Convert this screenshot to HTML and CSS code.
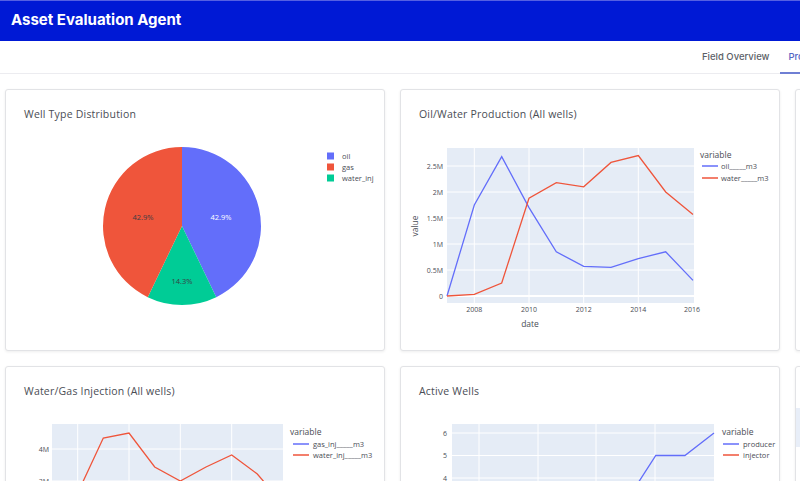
FILE: index.html
```html
<!DOCTYPE html>
<html>
<head>
<meta charset="utf-8">
<title>Asset Evaluation Agent</title>
<link rel="stylesheet" href="styles.css">
</head>
<body>
<header class="topbar">
  <h1 class="app-title">Asset Evaluation Agent</h1>
</header>
<nav class="tabs">
  <div class="tab">Field Overview</div>
  <div class="tab active">Production</div>
  <div class="tab">Wells</div>
</nav>
<main class="grid">
  <section class="card">
    <div class="card-title">Well Type Distribution</div>
    <svg class="chart" viewBox="0 0 378 229" width="378" height="229">
      <path d="M176,105 L176,26 A79,79 0 0 1 210.26,176.18 Z" fill="#636efa"/>
      <path d="M176,105 L210.26,176.18 A79,79 0 0 1 141.74,176.18 Z" fill="#00cc96"/>
      <path d="M176,105 L141.74,176.18 A79,79 0 0 1 176,26 Z" fill="#ef553b"/>
      <text class="pl-w" x="215" y="99" text-anchor="middle">42.9%</text>
      <text class="pl" x="137" y="99" text-anchor="middle">42.9%</text>
      <text class="pl" x="176" y="163" text-anchor="middle">14.3%</text>
      <rect x="321" y="31.5" width="7" height="7" fill="#636efa"/>
      <rect x="321" y="42.5" width="7" height="7" fill="#ef553b"/>
      <rect x="321" y="53.5" width="7" height="7" fill="#00cc96"/>
      <text class="lg" x="336" y="37.5">oil</text>
      <text class="lg" x="336" y="48.5">gas</text>
      <text class="lg" x="336" y="59.5">water_inj</text>
    </svg>
  </section>

  <section class="card">
    <div class="card-title">Oil/Water Production (All wells)</div>
    <svg class="chart" viewBox="0 0 378 229" width="378" height="229">
      <rect x="46" y="27" width="247" height="155" fill="#e5ecf6"/>
      <g stroke="#fff" stroke-width="1">
        <line x1="46" x2="293" y1="149" y2="149"/>
        <line x1="46" x2="293" y1="123" y2="123"/>
        <line x1="46" x2="293" y1="97" y2="97"/>
        <line x1="46" x2="293" y1="71" y2="71"/>
        <line x1="46" x2="293" y1="45" y2="45"/>
        <line x1="73.3" x2="73.3" y1="27" y2="182"/>
        <line x1="128" x2="128" y1="27" y2="182"/>
        <line x1="182.7" x2="182.7" y1="27" y2="182"/>
        <line x1="237.3" x2="237.3" y1="27" y2="182"/>
      </g>
      <line x1="46" x2="293" y1="175" y2="175" stroke="#fff" stroke-width="2"/>
      <polyline fill="none" stroke="#636efa" stroke-width="1.3" points="46,175 73.3,84 100.7,35.6 128,86.6 155.3,130.8 182.7,145.4 210,146.4 237.3,137.6 264.7,130.8 292,159.4"/>
      <polyline fill="none" stroke="#ef553b" stroke-width="1.3" points="46,175 73.3,173.4 100.7,162 128,77.2 155.3,61.6 182.7,65.8 210,41.4 237.3,34.6 264.7,71 292,93.4"/>
      <g class="tk" text-anchor="end">
        <text x="42" y="177.5">0</text>
        <text x="42" y="151.5">0.5M</text>
        <text x="42" y="125.5">1M</text>
        <text x="42" y="99.5">1.5M</text>
        <text x="42" y="73.5">2M</text>
        <text x="42" y="47.5">2.5M</text>
      </g>
      <g class="tk" text-anchor="middle">
        <text x="73.3" y="191">2008</text>
        <text x="128" y="191">2010</text>
        <text x="182.7" y="191">2012</text>
        <text x="237.3" y="191">2014</text>
        <text x="291" y="191">2016</text>
      </g>
      <text class="ax" x="129" y="206" text-anchor="middle">date</text>
      <text class="ax" x="17" y="105" text-anchor="middle" transform="rotate(-90 17 105)">value</text>
      <text class="lgt" x="299" y="37">variable</text>
      <line x1="301" x2="317" y1="45" y2="45" stroke="#636efa" stroke-width="1.3"/>
      <line x1="301" x2="317" y1="57" y2="57" stroke="#ef553b" stroke-width="1.3"/>
      <text class="lg" x="320" y="47.5">oil_____m3</text>
      <text class="lg" x="320" y="59.5">water_____m3</text>
    </svg>
  </section>

  <section class="card"></section>

  <section class="card">
    <div class="card-title">Water/Gas Injection (All wells)</div>
    <svg class="chart" viewBox="0 0 378 229" width="378" height="229">
      <rect x="46" y="26" width="231" height="156" fill="#e5ecf6"/>
      <g stroke="#fff" stroke-width="1">
        <line x1="46" x2="277" y1="51" y2="51"/>
        <line x1="46" x2="277" y1="83" y2="83"/>
        <line x1="46" x2="277" y1="115" y2="115"/>
        <line x1="46" x2="277" y1="147" y2="147"/>
        <line x1="71.7" x2="71.7" y1="26" y2="182"/>
        <line x1="123" x2="123" y1="26" y2="182"/>
        <line x1="174.3" x2="174.3" y1="26" y2="182"/>
        <line x1="225.7" x2="225.7" y1="26" y2="182"/>
      </g>
      <line x1="46" x2="277" y1="179" y2="179" stroke="#fff" stroke-width="2"/>
      <polyline fill="none" stroke="#636efa" stroke-width="1.3" points="46,179 71.7,150 97.3,135 123,128 148.7,140 174.3,150 200,145 225.7,155 251.3,160 277,165"/>
      <polyline fill="none" stroke="#ef553b" stroke-width="1.3" points="46,179 71.7,95 97.3,40 123,35 148.7,69 174.3,83 200,69 225.7,57 251.3,76 277,106"/>
      <g class="tk" text-anchor="end">
        <text x="43" y="53.5">4M</text>
        <text x="43" y="85.5">3M</text>
        <text x="43" y="117.5">2M</text>
        <text x="43" y="149.5">1M</text>
        <text x="43" y="181.5">0</text>
      </g>
      <text class="lgt" x="284" y="37">variable</text>
      <line x1="287" x2="303" y1="46" y2="46" stroke="#636efa" stroke-width="1.3"/>
      <line x1="287" x2="303" y1="57" y2="57" stroke="#ef553b" stroke-width="1.3"/>
      <text class="lg" x="307" y="48.5">gas_inj_____m3</text>
      <text class="lg" x="307" y="59.5">water_inj_____m3</text>
    </svg>
  </section>

  <section class="card">
    <div class="card-title">Active Wells</div>
    <svg class="chart" viewBox="0 0 378 229" width="378" height="229">
      <rect x="51" y="26" width="262" height="156" fill="#e5ecf6"/>
      <g stroke="#fff" stroke-width="1">
        <line x1="51" x2="313" y1="35" y2="35"/>
        <line x1="51" x2="313" y1="57.5" y2="57.5"/>
        <line x1="51" x2="313" y1="80" y2="80"/>
        <line x1="51" x2="313" y1="102.5" y2="102.5"/>
        <line x1="51" x2="313" y1="125" y2="125"/>
        <line x1="51" x2="313" y1="147.5" y2="147.5"/>
        <line x1="78" x2="78" y1="26" y2="182"/>
        <line x1="137" x2="137" y1="26" y2="182"/>
        <line x1="195" x2="195" y1="26" y2="182"/>
        <line x1="254" x2="254" y1="26" y2="182"/>
      </g>
      <line x1="51" x2="313" y1="170" y2="170" stroke="#fff" stroke-width="2"/>
      <polyline fill="none" stroke="#ef553b" stroke-width="1.3" points="51,170 80.1,147.5 109.2,147.5 138.3,147.5 167.4,125 196.6,125 225.7,125 254.8,125 283.9,125 313,125"/>
      <polyline fill="none" stroke="#636efa" stroke-width="1.3" points="51,147.5 80.1,147.5 109.2,125 138.3,125 167.4,125 196.6,125 225.7,102.5 254.8,57.5 283.9,57.5 313,35"/>
      <g class="tk" text-anchor="end">
        <text x="46" y="37.5">6</text>
        <text x="46" y="60">5</text>
        <text x="46" y="82.5">4</text>
        <text x="46" y="105">3</text>
        <text x="46" y="127.5">2</text>
        <text x="46" y="150">1</text>
        <text x="46" y="172.5">0</text>
      </g>
      <text class="lgt" x="321" y="37">variable</text>
      <line x1="322" x2="338" y1="46" y2="46" stroke="#636efa" stroke-width="1.3"/>
      <line x1="322" x2="338" y1="57" y2="57" stroke="#ef553b" stroke-width="1.3"/>
      <text class="lg" x="342" y="48.5">producer</text>
      <text class="lg" x="342" y="59.5">injector</text>
    </svg>
  </section>

  <section class="card">
    <div class="side-block"></div>
  </section>
</main>
</body>
</html>
```

FILE: styles.css
```css
html, body {
  margin: 0;
  padding: 0;
  overflow: hidden;
  background: #ffffff;
}
body {
  font-family: "Inter", "Liberation Sans", sans-serif;
  width: 800px;
  height: 481px;
}
.topbar {
  height: 40px;
  background: #0019d5;
  border-top: 1px solid #5560e2;
  display: flex;
  align-items: center;
  padding-left: 11px;
}
.app-title {
  margin: 0;
  color: #ffffff;
  font-size: 15px;
  font-weight: 700;
  letter-spacing: 0;
  padding-bottom: 3px;
}
.tabs {
  display: flex;
  height: 32px;
  padding-left: 692px;
  border-bottom: 1px solid #ececf0;
  white-space: nowrap;
  box-sizing: content-box;
}
.tab {
  padding: 0 10px 1px 10px;
  font-size: 9.5px;
  font-weight: 500;
  color: #5b5e66;
  display: flex;
  align-items: center;
}
.tab.active {
  color: #5566c4;
  border-bottom: 2px solid #6f7fd4;
  padding-left: 9px;
  margin-bottom: -1px;
}
.grid {
  display: grid;
  grid-template-columns: repeat(3, 380px);
  grid-auto-rows: 262px;
  gap: 15px;
  padding: 15px 5px;
}
.card {
  background: #ffffff;
  border: 1px solid #e2e3e6;
  border-radius: 3px;
  box-shadow: 0 1px 3px rgba(0, 0, 0, 0.07);
  overflow: hidden;
}
.card-title {
  font-family: "Open Sans", "Liberation Sans", sans-serif;
  font-size: 10.5px;
  letter-spacing: 0.2px;
  line-height: 14px;
  color: #4a4d55;
  padding: 17px 0 0 18px;
  height: 14px;
}
.chart {
  display: block;
}
.chart text {
  font-family: "Open Sans", "Liberation Sans", sans-serif;
  fill: #4a4d55;
}
.chart .tk text { font-size: 7px; }
.chart .lg { font-size: 7.5px; }
.chart .lgt { font-size: 8.5px; }
.chart .ax { font-size: 8.5px; }
.chart .pl { font-size: 7.5px; fill: #3a3d44; }
.chart .pl-w { font-size: 7.5px; fill: #ffffff; }
.side-block {
  margin-top: 41px;
  height: 39px;
  background: #e8eef8;
}
```
